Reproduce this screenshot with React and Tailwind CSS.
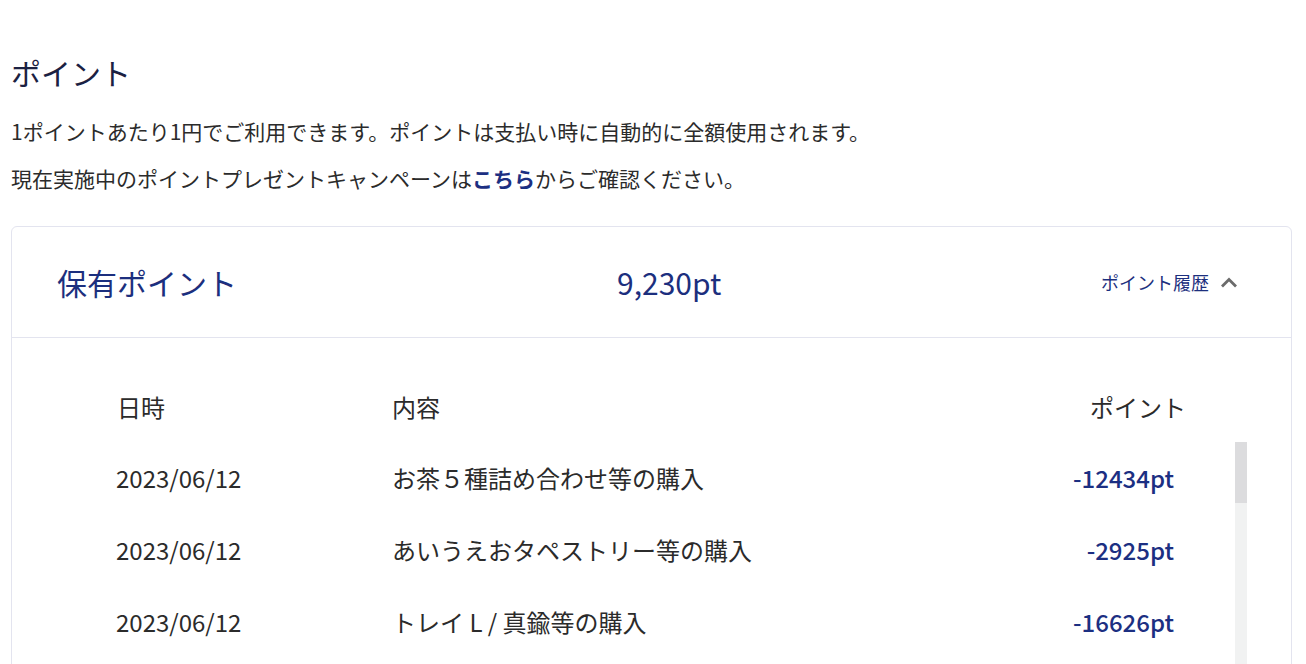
import React from "react";

const rows = [
  { date: "2023/06/12", desc: "お茶５種詰め合わせ等の購入", pt: "-12434pt" },
  { date: "2023/06/12", desc: "あいうえおタペストリー等の購入", pt: "-2925pt" },
  { date: "2023/06/12", desc: "トレイ L / 真鍮等の購入", pt: "-16626pt" },
];

export default function App() {
  return (
    <div
      className="w-[1306px] h-[664px] overflow-hidden bg-white px-[11px]"
      style={{ fontFamily: '"Noto Sans CJK JP", "Noto Sans", sans-serif' }}
    >
      <h1 className="pt-[52px] text-[30px] leading-[40px] text-[#1b2142] font-normal">ポイント</h1>
      <p className="mt-[24px] text-[21px] leading-[30px] text-[#2b2b2b]">
        1ポイントあたり1円でご利用できます。ポイントは支払い時に自動的に全額使用されます。
      </p>
      <p className="mt-[17px] text-[21px] leading-[30px] text-[#2b2b2b]">
        現在実施中のポイントプレゼントキャンペーンは
        <a className="font-bold text-[#1c2f82]">こちら</a>
        からご確認ください。
      </p>

      <div className="mt-[33px] w-[1281px] rounded-[6px] border border-[#e3e4ef]">
        <div className="flex h-[110px] items-center pl-[45px] pr-[53px]">
          <div className="w-[500px] text-[30px] text-[#1c2f7e]">保有ポイント</div>
          <div className="flex-1 text-[30px] text-[#1c2f7e] pl-[60px]">9,230pt</div>
          <div className="flex items-center gap-[11px] text-[18px] text-[#1c2f7e]">
            <span>ポイント履歴</span>
            <svg width="18" height="11" viewBox="0 0 18 11" fill="none">
              <path d="M2 9.5 L9 2.5 L16 9.5" stroke="#6b6b6b" strokeWidth="2.8" />
            </svg>
          </div>
        </div>
        <div className="border-t border-[#e3e4ef] px-[44px]">
          <div className="flex pt-[55px] h-[104px] px-[61px] text-[24px] leading-[28px] text-[#2b2b2b]">
            <div className="w-[275px]">日時</div>
            <div className="flex-1">内容</div>
            <div className="text-right">ポイント</div>
          </div>
          <div className="flex h-[260px] overflow-hidden">
            <div className="flex-1">
              {rows.map((r, i) => (
                <div
                  key={i}
                  className="flex h-[72px] items-center pl-[60px] pr-[61px] text-[24px] text-[#2b2b2b]"
                >
                  <div className="w-[276px]">{r.date}</div>
                  <div className="flex-1">{r.desc}</div>
                  <div className="font-medium text-[#1c2f82] text-right">{r.pt}</div>
                </div>
              ))}
            </div>
            <div className="flex w-[12px] flex-col bg-[#f1f2f2]">
              <div className="h-[61px] bg-[#dcdcde]"></div>
            </div>
          </div>
        </div>
      </div>
    </div>
  );
}
